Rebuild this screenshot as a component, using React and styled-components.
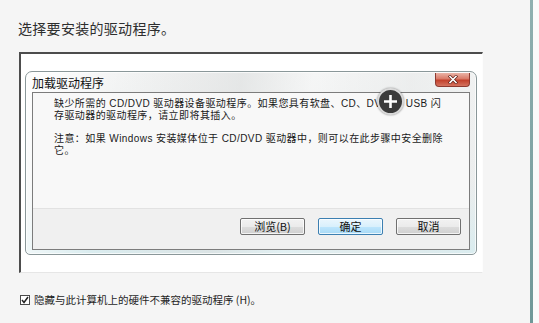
import React from "react";
import styled, { createGlobalStyle } from "styled-components";

const Global = createGlobalStyle`
  html, body { margin: 0; padding: 0; background: #f5f5f5; }
  body {
    width: 539px; height: 323px; overflow: hidden;
    font-family: "Noto Sans CJK SC", "Noto Sans", sans-serif;
  }
  * { box-sizing: border-box; }
`;

const Page = styled.div`
  display: flex;
  width: 539px;
  height: 323px;
`;

const Main = styled.div`
  flex: 0 0 530px;
  display: flex;
  flex-direction: column;
  padding: 20px 0 0 18px;
  background: #f5f5f5;
`;

const Edge = styled.div`
  flex: 0 0 3px;
  background: linear-gradient(to bottom, #8fb0b0, #6f9898);
`;

const Tail = styled.div`
  flex: 1;
  background: #fafafa;
`;

const Heading = styled.h1`
  margin: 0;
  font-size: 14px;
  font-weight: 400;
  line-height: 17px;
  letter-spacing: 0.3px;
  color: #2e2e2e;
`;

const Frame = styled.div`
  margin: 15px 0 0 1px;
  width: 464px;
  height: 221px;
  background: #fff;
  border-top: 2px solid #4d4d4d;
  border-left: 2px solid #4d4d4d;
  border-right: 1px solid #fdfdfd;
  border-bottom: 1px solid #e6e6e6;
  padding: 17px 0 0 4px;
`;

const Dialog = styled.div`
  position: relative;
  width: 452px;
  height: 184px;
  display: flex;
  flex-direction: column;
  border: 1px solid #8a9799;
  border-radius: 7px 7px 5px 5px;
  padding: 0 6px 4px 6px;
  background:
    linear-gradient(100deg, rgba(255,255,255,0.9) 0%, rgba(255,255,255,0) 20%, rgba(220,222,222,0.6) 45%, rgba(255,255,255,0.2) 60%, rgba(230,232,232,0.5) 80%, rgba(255,255,255,0) 100%),
    linear-gradient(to bottom, #f3f4f4 0%, #eceeee 60%, #d9ecef 100%);
  box-shadow: inset 0 0 0 1px rgba(255,255,255,0.7);
`;

const TitleBar = styled.div`
  height: 20px;
  display: flex;
  justify-content: space-between;
  align-items: flex-start;
`;

const DialogTitle = styled.span`
  font-size: 12px;
  line-height: 21px;
  color: #111;
`;

const Close = styled.div`
  width: 35px;
  height: 14px;
  margin-top: 1px;
  border: 1px solid #8e3a30;
  border-top: none;
  border-radius: 0 0 4px 4px;
  background: linear-gradient(to bottom, #eab3a6 0%, #d97a68 45%, #c2402b 55%, #d4735f 100%);
  display: flex;
  align-items: center;
  justify-content: center;
`;

const Client = styled.div`
  position: relative;
  height: 158px;
  display: flex;
  flex-direction: column;
  border: 1px solid #7c7c7c;
  background: #f8f8f8;
`;

const Body = styled.div`
  flex: 1;
  padding: 5px 0 0 21px;
`;

const Para = styled.p`
  margin: 0 0 12px 0;
  font-family: "Liberation Sans", "Noto Sans CJK SC", sans-serif;
  font-size: 10px;
  line-height: 11.5px;
  letter-spacing: 0.42px;
  color: #1a1a1a;
  white-space: nowrap;
`;

const ButtonBar = styled.div`
  height: 41px;
  display: flex;
  justify-content: flex-end;
  align-items: flex-start;
  gap: 13px;
  padding: 9px 8px 0 0;
  background: #f0f0f0;
  border-top: 1px solid #e2e2e2;
`;

const Button = styled.button`
  width: 65px;
  height: 17px;
  padding: 0;
  font-family: inherit;
  font-size: 11px;
  line-height: 15px;
  color: #111;
  border-radius: 2px;
  border: 1px solid ${(p) => (p.$primary ? "#3c7fb1" : "#707070")};
  background: ${(p) =>
    p.$primary
      ? "linear-gradient(to bottom, #eaf6fd 0%, #d9f0fc 50%, #bee6fd 51%, #a7d9f5 100%)"
      : "linear-gradient(to bottom, #f2f2f2 0%, #ebebeb 50%, #dddddd 51%, #cfcfcf 100%)"};
  box-shadow: inset 0 0 0 1px rgba(255,255,255,0.75);
`;

const Plus = styled.div`
  position: absolute;
  left: 344px;
  top: -5px;
  width: 27px;
  height: 27px;
  border-radius: 50%;
  background: #3b3b3b;
  border: 2px solid rgba(235,235,235,0.9);
  box-shadow: 0 0 2px rgba(0,0,0,0.45);
  display: flex;
  align-items: center;
  justify-content: center;
`;

const CheckRow = styled.label`
  margin: 20px 0 0 2px;
  display: flex;
  align-items: center;
  gap: 4px;
  font-size: 10.5px;
  line-height: 13px;
  color: #1f1f1f;
`;

const Box = styled.span`
  width: 10px;
  height: 10px;
  border: 1px solid #4a4a4a;
  background: #fff;
  display: flex;
  align-items: center;
  justify-content: center;
`;

export default function App() {
  return (
    <>
      <Global />
      <Page>
        <Main>
          <Heading>选择要安装的驱动程序。</Heading>
          <Frame>
            <Dialog>
              <TitleBar>
                <DialogTitle>加载驱动程序</DialogTitle>
                <Close>
                  <svg width="10" height="9" viewBox="0 0 10 9">
                    <path d="M2 1.5 L8 7.5 M8 1.5 L2 7.5" stroke="#5a1a12" strokeWidth="3" strokeLinecap="square" />
                    <path d="M2 1.5 L8 7.5 M8 1.5 L2 7.5" stroke="#fff" strokeWidth="1.6" strokeLinecap="square" />
                  </svg>
                </Close>
              </TitleBar>
              <Client>
                <Body>
                  <Para>
                    缺少所需的 CD/DVD 驱动器设备驱动程序。如果您具有软盘、CD、DVD 或 USB 闪
                    <br />
                    存驱动器的驱动程序，请立即将其插入。
                  </Para>
                  <Para>
                    注意：如果 Windows 安装媒体位于 CD/DVD 驱动器中，则可以在此步骤中安全删除
                    <br />
                    它。
                  </Para>
                </Body>
                <ButtonBar>
                  <Button>浏览(B)</Button>
                  <Button $primary>确定</Button>
                  <Button>取消</Button>
                </ButtonBar>
                <Plus>
                  <svg width="15" height="15" viewBox="0 0 15 15">
                    <path d="M7.5 1 V14 M1 7.5 H14" stroke="#fff" strokeWidth="2.6" />
                  </svg>
                </Plus>
              </Client>
            </Dialog>
          </Frame>
          <CheckRow>
            <Box>
              <svg width="8" height="8" viewBox="0 0 8 8">
                <path d="M1 4 L3 6.5 L7 1" stroke="#222" strokeWidth="1.5" fill="none" />
              </svg>
            </Box>
            隐藏与此计算机上的硬件不兼容的驱动程序 (H)。
          </CheckRow>
        </Main>
        <Edge />
        <Tail />
      </Page>
    </>
  );
}
